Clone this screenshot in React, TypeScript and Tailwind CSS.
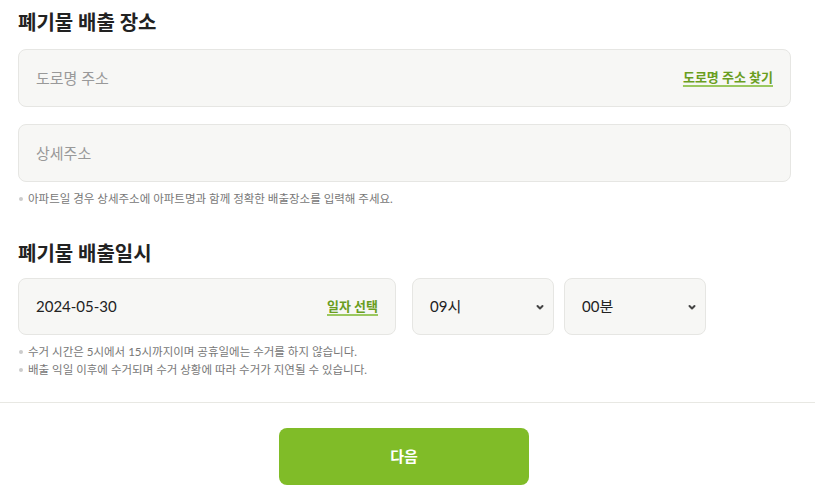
const font = "font-['Lato','Noto_Sans_CJK_KR',sans-serif]"

function Note({ children }: { children: string }) {
  return (
    <li className="flex items-center h-[18px] text-[11.5px] text-[#777]">
      <span className="w-[4px] h-[4px] rounded-full bg-[#ccc] mr-[5px] ml-[1px]" />
      {children}
    </li>
  )
}

function Chevron() {
  return (
    <svg width="10" height="10" viewBox="0 0 10 10" className="text-[#444]">
      <path d="M2.5 4 L5 6.5 L7.5 4" fill="none" stroke="currentColor" strokeWidth="2" strokeLinecap="round" strokeLinejoin="round" />
    </svg>
  )
}

function Select({ value }: { value: string }) {
  return (
    <div className="w-[142px] h-[57px] rounded-[8px] border border-[#e6e6e3] bg-[#f7f7f5] flex items-center justify-between pl-[17px] pr-[8px]">
      <span className="text-[15px] text-[#222]">{value}</span>
      <Chevron />
    </div>
  )
}

export default function App() {
  return (
    <div className={`${font} w-[818px] h-[493px] bg-white overflow-hidden`}>
      <div className="pl-[18px] pr-[27px] pt-[9px]">
        <h2 className="h-[26px] leading-[26px] text-[20px] font-bold text-[#222]">폐기물 배출 장소</h2>
        <div className="mt-[14px] h-[58px] rounded-[8px] border border-[#e6e6e3] bg-[#f7f7f5] flex items-center justify-between pl-[17px] pr-[17px]">
          <span className="text-[15px] text-[#999]">도로명 주소</span>
          <span className="text-[13px] font-bold text-[#6a9e1f] underline underline-offset-[3px] decoration-[#9bc860] decoration-2">도로명 주소 찾기</span>
        </div>
        <div className="mt-[17px] h-[58px] rounded-[8px] border border-[#e6e6e3] bg-[#f7f7f5] flex items-center pl-[17px]">
          <span className="text-[15px] text-[#999]">상세주소</span>
        </div>
        <ul className="mt-[8px]">
          <Note>아파트일 경우 상세주소에 아파트명과 함께 정확한 배출장소를 입력해 주세요.</Note>
        </ul>

        <h2 className="mt-[32px] h-[26px] leading-[26px] text-[20px] font-bold text-[#222]">폐기물 배출일시</h2>
        <div className="mt-[12px] flex">
          <div className="w-[378px] h-[57px] rounded-[8px] border border-[#e6e6e3] bg-[#f7f7f5] flex items-center justify-between pl-[17px] pr-[17px]">
            <span className="text-[15px] text-[#222]">2024-05-30</span>
            <span className="text-[13px] font-bold text-[#6a9e1f] underline underline-offset-[3px] decoration-[#9bc860] decoration-2">일자 선택</span>
          </div>
          <div className="ml-[16px]">
            <Select value="09시" />
          </div>
          <div className="ml-[10px]">
            <Select value="00분" />
          </div>
        </div>
        <ul className="mt-[8px]">
          <Note>수거 시간은 5시에서 15시까지이며 공휴일에는 수거를 하지 않습니다.</Note>
          <Note>배출 익일 이후에 수거되며 수거 상황에 따라 수거가 지연될 수 있습니다.</Note>
        </ul>
      </div>
      <div className="mt-[23px] mr-[3px] h-px bg-[#e8e8e3]" />
      <div className="mt-[25px] flex justify-center pr-[10px]">
        <button className="w-[250px] h-[57px] rounded-[8px] bg-[#80bc28] text-white text-[15px] font-bold">다음</button>
      </div>
    </div>
  )
}
